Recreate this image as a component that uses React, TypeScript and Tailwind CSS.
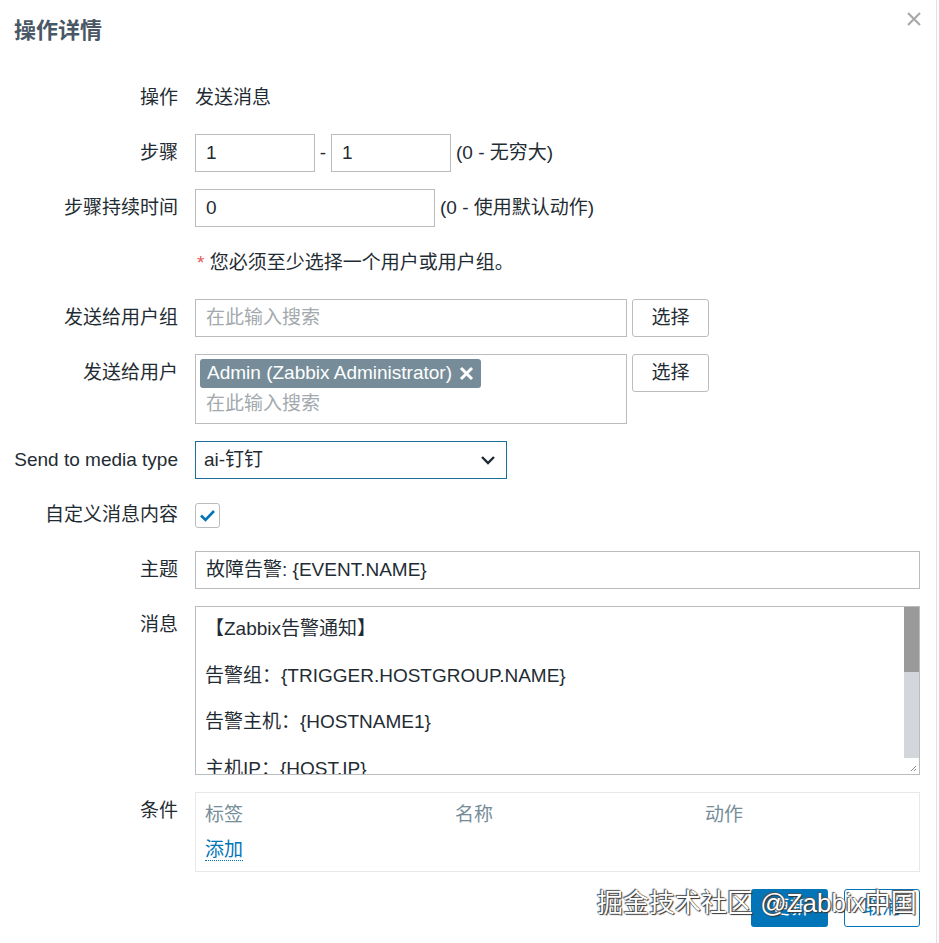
import { ReactNode } from "react"

const font = { fontFamily: '"Liberation Sans", Arial, "Noto Sans CJK SC", sans-serif' }

function Row({ label, children }: { label: string; children: ReactNode }) {
  return (
    <div className="flex items-start">
      <div className="w-[164px] shrink-0 h-[38px] leading-[38px] text-right whitespace-nowrap">{label}</div>
      <div className="ml-[17px] flex-1 min-w-0">{children}</div>
    </div>
  )
}

function Input({ value, placeholder, className = "" }: { value?: string; placeholder?: string; className?: string }) {
  return (
    <div className={`h-[38px] border border-[#b9bdc0] bg-white px-[10px] leading-[36px] whitespace-nowrap ${className}`}>
      {value ? value : <span className="text-[#a3a9ad]">{placeholder}</span>}
    </div>
  )
}

function SelectBtn() {
  return (
    <button className="h-[38px] w-[77px] shrink-0 rounded-[3px] border border-[#b9bdc0] bg-white text-[#1f2c33]">
      选择
    </button>
  )
}

export default function App() {
  const lines = [
    "【Zabbix告警通知】",
    "",
    "告警组：{TRIGGER.HOSTGROUP.NAME}",
    "",
    "告警主机：{HOSTNAME1}",
    "",
    "主机IP：{HOST.IP}",
    "",
    "告警时间：{EVENT.DATE} {EVENT.TIME}",
  ]

  return (
    <div className="relative h-[943px] w-[937px] border-r border-[#dfe1e3] bg-white text-[19px] text-[#1f2c33]" style={font}>
      {/* header */}
      <div className="flex h-[60px] items-center justify-between pl-[14px] pr-[14px]">
        <h1 className="text-[22px] font-bold text-[#4a5866]">操作详情</h1>
        <svg width="16" height="16" viewBox="0 0 16 16" className="-mt-[23px] text-[#a9a9a9]">
          <path d="M2 2L14 14M14 2L2 14" stroke="currentColor" strokeWidth="2.2" />
        </svg>
      </div>

      <div className="mt-[19px] flex flex-col gap-[17px] pl-[14px] pr-[16px]">
        <Row label="操作">
          <div className="h-[38px] leading-[38px]">发送消息</div>
        </Row>

        <Row label="步骤">
          <div className="flex items-center">
            <Input value="1" className="w-[120px]" />
            <span className="w-[16px] text-center">-</span>
            <Input value="1" className="w-[120px]" />
            <span className="ml-[5px]">(0 - 无穷大)</span>
          </div>
        </Row>

        <Row label="步骤持续时间">
          <div className="flex items-center">
            <Input value="0" className="w-[240px]" />
            <span className="ml-[5px]">(0 - 使用默认动作)</span>
          </div>
        </Row>

        <Row label="">
          <div className="h-[38px] leading-[38px] pl-[2px]">
            <span className="text-[#e45959]">*</span> 您必须至少选择一个用户或用户组。
          </div>
        </Row>

        <Row label="发送给用户组">
          <div className="flex items-start gap-[5px]">
            <Input placeholder="在此输入搜索" className="w-[432px]" />
            <SelectBtn />
          </div>
        </Row>

        <Row label="发送给用户">
          <div className="flex items-start gap-[5px]">
            <div className="h-[70px] w-[432px] border border-[#b9bdc0] bg-white px-[4px] pt-[4px]">
              <div className="inline-flex h-[29px] items-center gap-[7px] rounded-[3px] bg-[#768d99] px-[7px] text-white whitespace-nowrap">
                Admin (Zabbix Administrator)
                <svg width="15" height="15" viewBox="0 0 15 15">
                  <path d="M2 2L13 13M13 2L2 13" stroke="white" strokeWidth="3" />
                </svg>
              </div>
              <div className="pl-[6px] leading-[32px] text-[#a3a9ad]">在此输入搜索</div>
            </div>
            <SelectBtn />
          </div>
        </Row>

        <Row label="Send to media type">
          <div className="flex h-[38px] w-[312px] items-center justify-between border border-[#1d6e98] bg-white pl-[8px] pr-[10px]">
            <span>ai-钉钉</span>
            <svg width="16" height="10" viewBox="0 0 16 10">
              <path d="M2 2L8 8L14 2" stroke="#1f2c33" strokeWidth="2.4" fill="none" />
            </svg>
          </div>
        </Row>

        <Row label="自定义消息内容">
          <div className="flex h-[38px] items-center">
            <div className="flex h-[25px] w-[25px] items-center justify-center rounded-[3px] border border-[#b9bdc0] bg-white">
              <svg width="17" height="13" viewBox="0 0 17 13">
                <path d="M2 6.5L6.5 11L15 2" stroke="#0275b8" strokeWidth="2.6" fill="none" />
              </svg>
            </div>
          </div>
        </Row>

        <Row label="主题">
          <Input value="故障告警: {EVENT.NAME}" />
        </Row>

        <Row label="消息">
          <div className="flex h-[169px] border border-[#b9bdc0] bg-white">
            <div className="flex-1 overflow-hidden pl-[9px] pt-[10px] leading-[23.3px]">
              {lines.map((l, i) => (
                <div key={i} className="h-[23.3px] whitespace-nowrap">
                  {l}
                </div>
              ))}
            </div>
            <div className="flex w-[15px] flex-col bg-[#d3d7dc]">
              <div className="h-[65px] bg-[#9a9a9a]" />
              <div className="flex-1" />
              <div className="flex h-[16px] items-end justify-end bg-white pb-[2px] pr-[2px]">
                <svg width="7" height="7" viewBox="0 0 7 7">
                  <path d="M1 6L6 1M4 6L6 4" stroke="#888" strokeWidth="1" />
                </svg>
              </div>
            </div>
          </div>
        </Row>

        <Row label="条件">
          <div className="h-[80px] border border-[#e6e8ea] bg-white pl-[9px]">
            <div className="grid grid-cols-[250px_250px_1fr] pt-[9px] leading-[26px] text-[#768d99]">
              <span>标签</span>
              <span>名称</span>
              <span>动作</span>
            </div>
            <div className="mt-[8px]">
              <span className="border-b border-dotted border-[#0275b8] leading-[24px] text-[#0275b8]">添加</span>
            </div>
          </div>
        </Row>

        <div className="flex justify-end gap-[16px]">
          <button className="h-[38px] w-[77px] rounded-[3px] bg-[#0275b8] text-white">更新</button>
          <button className="h-[38px] w-[76px] rounded-[3px] border border-[#0275b8] bg-white text-[#0275b8]">取消</button>
        </div>
      </div>

      {/* watermark */}
      <span className="pointer-events-none absolute left-[597px] top-[886px] whitespace-nowrap text-[26px] leading-[34px] text-white [text-shadow:0_0_1px_#333,1px_1px_1px_#333,-1px_-1px_1px_#555]">
        掘金技术社区 @Zabbix中国
      </span>
    </div>
  )
}
